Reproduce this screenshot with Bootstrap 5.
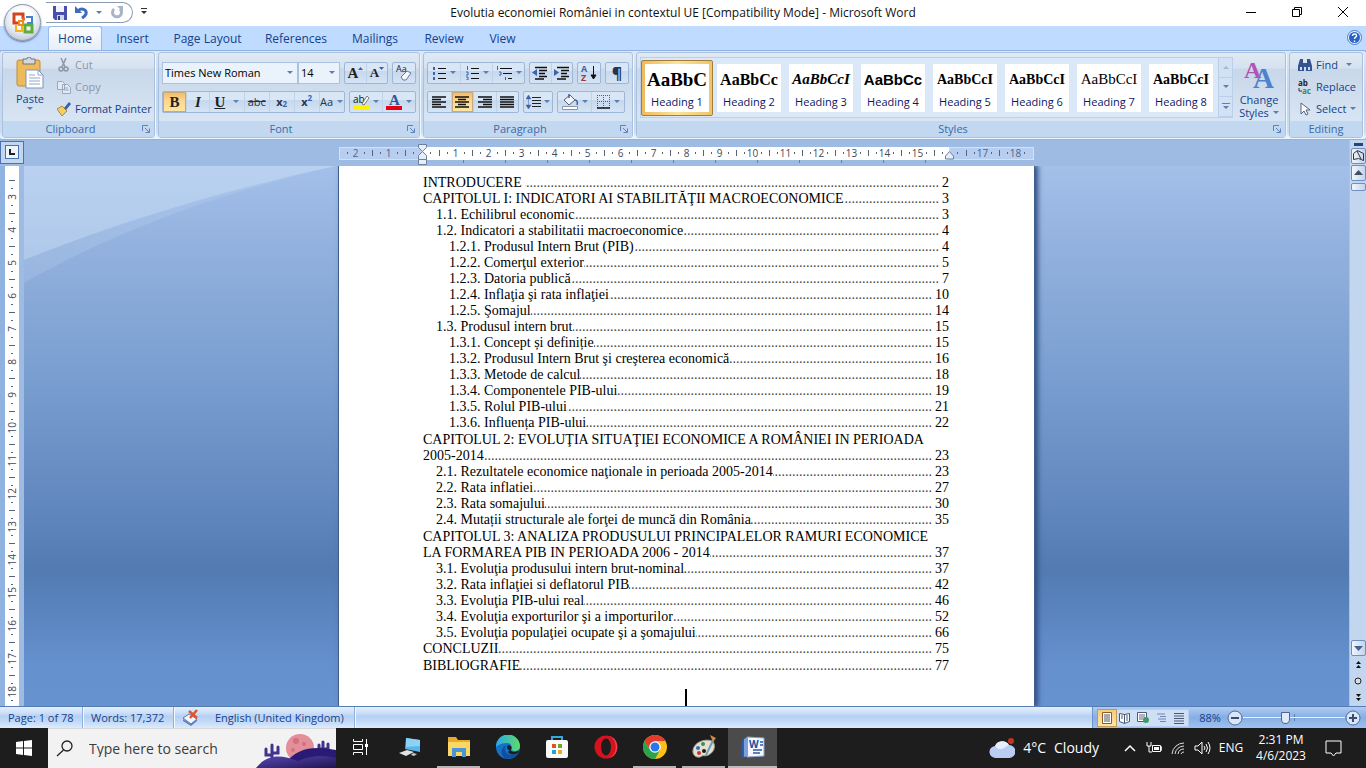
<!DOCTYPE html>
<html lang="en">
<head>
<meta charset="utf-8">
<meta name="viewport" content="width=device-width, initial-scale=1">
<title>Evolutia economiei României in contextul UE - Microsoft Word</title>
<link href="https://cdn.jsdelivr.net/npm/bootstrap@5.3.0/dist/css/bootstrap.min.css" rel="stylesheet">
<style>
body{font-family:"Open Sans","Noto Sans",sans-serif;font-size:11px;line-height:16px;color:#15428b;background:#9dbbe3}
button,select,input{font-family:inherit;font-size:inherit;line-height:inherit}
button{border:0;background:none;padding:0;color:inherit}
a{color:inherit;text-decoration:none}
svg{display:block;flex:none}
/* title bar */
.titlebar{height:26px;background:#fff;color:#111;font-size:12px}
.caption-text{padding-top:5px}
.qat{height:21px;width:87px;margin-left:46px;border:1px solid #8c9ab0;border-left:0;border-radius:0 11px 11px 0;padding-left:7px;margin-top:2px}
.side{flex:1 1 0}
.winbtn{width:46px;height:25px}
.orb{left:4px;top:4px;width:37px;height:37px;border-radius:50%;z-index:5;border:1px solid #8797b0;background:radial-gradient(circle at 50% 35%,#fff 0 30%,#dfe3ec 60%,#c3c9d6 80%,#fff 100%);box-shadow:0 1px 2px #5b76a5}
.caret{width:0;height:0;border:3px solid transparent;border-top-color:#5c7fae;border-bottom:0;flex:none}
.mid{place-items:center}
/* tabs */
.tabrow{height:24px;background:#bfdbff;padding-left:48px;font-size:12px}
.tabrow .nav-link{padding:4px 0 0;height:24px;color:#15428b;border:1px solid transparent;border-bottom:0;text-align:center;border-radius:3px 3px 0 0}
.tabrow .nav-link.active{background:linear-gradient(#fdfdfe,#e6eef8);border-color:#99bbe8;color:#15428b}
/* ribbon */
.ribbon{height:90px;background:linear-gradient(#dfe8f5 0,#cfdef0 20%,#c5d7ec 50%,#c9dcf1 92%,#e5f4ff 98%);border-top:1px solid #8db2e3;border-bottom:1px solid #8db2e3;padding:1px 3px 1px 2px;gap:3px;border-radius:3px}
.grp{height:86px;border:1px solid #a9c1de;border-radius:3px;background:linear-gradient(#e0e9f4 0,#d6e2f0 18%,#c8d7e9 19%,#dce9f7 100%);box-shadow:1px 1px 0 #eef6ff;display:flex;flex-direction:column}
.grp-body{flex:1;min-height:0}
.grp-label{height:16px;background:#c1d8f0;color:#3e6aaa;text-align:center;display:flex}
.grp-label span{flex:1}
.grp-label button{width:16px;display:grid;place-items:center}
.g-clip{width:153px}.g-font{width:262px}.g-para{width:210px}.g-edit{width:74px}
.rows{padding:9px 3px 0;display:flex;flex-direction:column;gap:7px}
.rowline{display:flex;gap:4px}
.tg{display:flex;height:22px;border:1px solid #9db7d8;border-radius:2px;background:linear-gradient(#d9e6f5 0 40%,#c5d8ee 41%,#d5e4f5)}
.tg button{display:flex;align-items:center;justify-content:center;gap:3px;flex:1 1 22px;border-left:1px solid #bfd2e9;color:#26344e;min-width:0}
.tg button:first-child{border-left:0}
.tg .wide{flex-basis:34px}
.tg .third{flex-basis:24px;gap:0}
.tg .on{background:linear-gradient(#f5b863,#fdd48b 40%,#ffe79f);box-shadow:0 0 0 1px #c4ab7c inset}
.tg .glyph{font-family:"Liberation Serif",serif;font-size:15px;font-weight:700;color:#222;gap:0}
.tg .glyph.small-a{font-size:13px}
.tg sub,.tg sup{font-size:8px;color:#3b62ad}
.combo{appearance:none;height:22px;border:1px solid #abc1de;border-radius:0;background:#eaf2fb url("data:image/svg+xml,%3Csvg xmlns='http://www.w3.org/2000/svg' width='6' height='3'%3E%3Cpath d='M0 0h6L3 3z' fill='%235c7fae'/%3E%3C/svg%3E") no-repeat right 4px center;color:#000;padding:0 2px}
.combo-font{width:136px}.combo-size{width:42px}
.w44{width:44px}.w24{width:24px}.w68{width:68px}.w98{width:98px}.w92{width:92px}.w30{width:30px}.w184{width:184px}
.paste{width:46px;padding-top:4px}
.paste svg{margin-bottom:2px}
.cmds{padding-top:1px}
.smallcmd{display:flex;align-items:center;gap:4px;height:22px;white-space:nowrap}
.off{color:#8d96a5}
.gallery{margin:4px 3px 3px;height:61px;border:1px solid #b9cfea;background:#dbe8f7;flex:1;overflow:hidden}
.sty{flex:0 0 72px;height:56px;margin-top:2px;padding:4px;background:none}
.sty>span{display:block;width:64px;height:48px;background:#fff;overflow:hidden}
.sty b,.sty i{display:block;height:31px;line-height:31px;font-family:"Liberation Serif",serif;color:#000;white-space:nowrap;width:64px;text-align:center;font-size:16px}
.sty small{display:block;font-size:11px;line-height:14px;color:#0d1668;text-align:center;white-space:nowrap}
.sty.sel{border:1px solid #a07f3c;padding:3px;background:linear-gradient(90deg,#f0b95c,#fbe39a 50%,#f0c568);border-radius:2px}
.sty .s19{font-size:19px}.sty .sans{font-family:"Liberation Sans",sans-serif;font-size:15px}.sty .s15{font-size:15px}.sty .s14{font-size:14px}
.galbtns{width:14px}
.galbtns button{flex:1;border-left:1px solid #b9cfea;border-bottom:1px solid #b9cfea;display:grid;place-items:center;background:#d2e2f4}
.change{width:46px;padding-top:4px;margin-right:3px;line-height:13px}
/* workspace */
.workspace{background:#9dbbe3}
.hbar{height:26px}
.corner{width:24px;height:23px;border:1px solid #4a72b0;background:#c3d5ef;margin-top:1px;display:grid;place-items:center}
.corner span{width:14px;height:14px;border:1px solid #4a72b0;background:#eef4fc;display:grid;place-items:center}
.scale{width:695px;padding-top:7px;font-size:10px;color:#3f4a5c}
.band{height:13px;line-height:13px;display:flex;overflow:hidden}
.margin-l,.margin-r{background:#b7cef0;outline:1px solid #d2e1f7;outline-offset:-1px;color:#4f6389}
.margin-l{width:83px}.margin-r{width:85px}
.inner{width:527px;background:#fff}
.cm{flex:0 0 33px;text-align:center;background:linear-gradient(#56637c,#56637c) 0 50%/1px 6px no-repeat,linear-gradient(#56637c,#56637c) 8px 50%/1px 2px no-repeat,linear-gradient(#56637c,#56637c) 25px 50%/1px 2px no-repeat}
.half{flex:0 0 17px;background:linear-gradient(#56637c,#56637c) 8px 50%/1px 2px no-repeat}
.half.t{background:linear-gradient(#56637c,#56637c) 0 50%/1px 6px no-repeat,linear-gradient(#56637c,#56637c) 8px 50%/1px 2px no-repeat}
.tabticks{height:6px;margin-left:83px;width:527px;background:repeating-linear-gradient(90deg,transparent 0 41px,#6282b2 41px 42px) 0 0/100% 3px no-repeat}
.ind-l{left:79px;top:4px}.ind-r{left:606px;top:10px}
.vbar{width:24px;padding-left:5px;background:linear-gradient(90deg,#8fb2e0 0 5px,#9dbbe3 5px)}
.vscale{width:14px;background:#fff;color:#3f4a5c;font-size:10px;overflow:hidden;height:100%;padding-top:14px}
.vcm{height:33px;width:14px;display:flex;align-items:center;justify-content:center;background:linear-gradient(#56637c,#56637c) 50% 0/6px 1px no-repeat,linear-gradient(#56637c,#56637c) 50% 8px/2px 1px no-repeat,linear-gradient(#56637c,#56637c) 50% 25px/2px 1px no-repeat}
.vcm span{writing-mode:vertical-rl;transform:rotate(180deg);line-height:14px}
.canvas{background:linear-gradient(#a3c0ea 0,#93b1de 15%,#7a9fd0 38%,#6388c0 62%,#527bb2 75%,#6490cd 92%,#6793d0)}
.sheet{width:695px;height:100%;background:#fff;box-shadow:0 0 0 1px #3f5f8f,3px 0 5px 1px #2f4f82;color:#000;padding:9px 85px 0 84px;overflow:hidden;font-family:"Liberation Serif",serif;font-size:14px;line-height:16px;position:relative}
.toc{list-style:none;margin:0;padding:0}
.toc li{display:flex;white-space:nowrap}
.toc .l2{padding-left:13px}.toc .l3{padding-left:26px}
.toc .brk{display:block}
.toc .chap{margin-top:1px}
.lead-dots{flex:1;overflow:hidden;direction:rtl;height:16px;min-width:0;margin-right:3px;color:#444}
.lead-dots::before{content:"................................................................................................................................................................"}
.cursor{width:2px;height:18px;background:#000;margin:15px auto 0}
.vscroll{width:17px;background:#c3d6f0;border-left:1px solid #a9c2e6}
.splitter{height:3px;width:9px;background:#27457b;margin:3px 0 2px}
.sb{width:15px;height:16px;border:1px solid #6f8fbf;border-radius:2px;background:linear-gradient(90deg,#f1f6fd,#c3d4ec);display:grid;place-items:center;margin-top:1px}
.sb.thumb{height:8px;margin-top:2px}
/* status bar */
.status{height:22px;background:linear-gradient(#e3effd 0,#cfe1f9 25%,#b5d0f3 45%,#c6dcf8 75%,#dcebff);border-top:1px solid #567db1;font-size:11px}
.status>div,.status>a{display:flex;align-items:center}
.cell{border-right:1px solid #90b1dd;box-shadow:1px 0 0 #f1f7ff}
.zoombar{width:274px;background:linear-gradient(#b0ccf2,#86aee4 50%,#9fc1f0);border-left:1px solid #6e94cc}
.pct{width:26px;margin:0 4px 0 8px;text-align:center}
.views{border:1px solid #b5cdf0;background:#cfe0f6;height:18px}
.views button{width:18px;height:16px;display:grid;place-items:center}
.views .on{background:linear-gradient(#f7ca7b,#ffe7a5);box-shadow:0 0 0 1px #bf9a58}
.zslide{appearance:none;width:102px;height:16px;background:linear-gradient(#e9f2ff,#e9f2ff) 0 50%/100% 1px no-repeat,linear-gradient(#5e80b5,#5e80b5) 50% 50%/1px 7px no-repeat}
.zslide::-webkit-slider-thumb{appearance:none;width:9px;height:12px;border:1px solid #4c6691;border-radius:1px 1px 5px 5px;background:#dfe9f7}
/* taskbar */
.taskbar{height:40px;background:#1d1d1d;color:#fff;font-size:12px}
.start{width:48px;display:grid;place-items:center}
.search{width:288px;background:#f2f2f2;border-top:1px solid #d8d8d8;overflow:hidden}
.search input{border:0;outline:0;background:none;font-size:14px;color:#333;width:150px;padding:0}
.search input::placeholder{color:#3c3c3c;opacity:1}
.task{width:49px;display:grid;place-items:center;border-bottom:2px solid transparent;background-clip:padding-box}
.task.open{border-image:linear-gradient(90deg,transparent 4px,#b5b5b5 4px 45px,transparent 45px) 1}
.task.active{background:#4b4b4b;border-bottom:2px solid #bdbdbd}
.tray button,.tray a{display:grid;place-items:center;width:24px}
.weather{font-size:14px;margin-right:19px}
.tray .lang{width:28px;margin-left:3px}.tray .clock{width:72px}.tray .note{width:32px}
.edge-gap{width:17px}
</style>
</head>
<body class="vh-100 d-flex flex-column overflow-hidden">
<button class="orb mid position-absolute d-grid" aria-label="Office Button">
<svg width="24" height="24" viewBox="0 0 24 24" fill="none" stroke-width="3"><path d="M8 12H3V3h9v5" stroke="#d4431c"/><path d="M11 8h3" stroke="#e9682a"/><path d="M15 6h6v6h-5" stroke="#3f83cf" stroke-width="2"/><path d="M5 14v6h6v-5" stroke="#f4b31b" stroke-width="2"/><path d="M14 21h7v-7h-7z" stroke="#5fae3b"/><path d="M8 10h4v4H8z" stroke="#f08a24" stroke-width="2"/></svg></button>

<header class="titlebar d-flex align-items-start">
 <div class="side d-flex align-items-center">
  <div class="qat d-flex align-items-center">
   <button aria-label="Save"><svg width="14" height="14" viewBox="0 0 14 14"><path d="M0 0h14v14H2l-2-2z" fill="#4a4fae"/><path d="M3 0h8v6H3z" fill="#f0f3fb"/><path d="M4 9h7v5H4z" fill="#cfd5ea"/><path d="M5 10h2v4H5z" fill="#333a80"/></svg></button>
   <button class="ms-2" aria-label="Undo"><svg width="13" height="13" viewBox="0 0 13 13" fill="none" stroke="#3b6cc0" stroke-width="3"><path d="M3 5c4-4 9-1 8 3-1 2-2 3-4 4"/><path d="M0 0v7h7z" fill="#3b6cc0" stroke="none"/></svg></button>
   <span class="caret ms-2"></span>
   <button class="ms-2" aria-label="Repeat"><svg width="14" height="14" viewBox="0 0 14 14" fill="none" stroke="#a9b4c8" stroke-width="3"><path d="M4 3a4.500 4.500 0 1 0 6 0"/><path d="M7 0h6v6z" fill="#a9b4c8" stroke="none"/></svg></button>
  </div>
  <button class="ms-2" aria-label="Customize Quick Access Toolbar"><svg width="6" height="7"><path d="M0 0h6v1H0zM0 3h6L3 6z" fill="#333"/></svg></button>
 </div>
 <div class="caption-text text-nowrap">Evolutia economiei României in contextul UE [Compatibility Mode] - Microsoft Word</div>
 <div class="side d-flex justify-content-end">
  <button class="winbtn mid d-grid" aria-label="Minimize"><svg width="11" height="11"><path d="M0 5.500h10" stroke="#000"/></svg></button>
  <button class="winbtn mid d-grid" aria-label="Restore"><svg width="11" height="11" fill="none" stroke="#000"><path d="M.5 2.500h7v7h-7zM2.500 2.500v-2h7v7h-2"/></svg></button>
  <button class="winbtn mid d-grid" aria-label="Close"><svg width="11" height="11" stroke="#000"><path d="M0 0l10 10M10 0L0 10"/></svg></button>
 </div>
</header>

<nav class="tabrow d-flex nav flex-nowrap">
 <a class="nav-link active" style="width:54px" href="#">Home</a>
 <a class="nav-link" style="width:61px" href="#">Insert</a>
 <a class="nav-link" style="width:89px" href="#">Page Layout</a>
 <a class="nav-link" style="width:88px" href="#">References</a>
 <a class="nav-link" style="width:70px" href="#">Mailings</a>
 <a class="nav-link" style="width:68px" href="#">Review</a>
 <a class="nav-link" style="width:49px" href="#">View</a>
 <button class="ms-auto me-1" aria-label="Help"><svg width="15" height="15" viewBox="0 0 15 15"><circle cx="7.500" cy="7.500" r="7" fill="#e9f2ff" stroke="#4a7bd0"/><circle cx="7.500" cy="7.500" r="5.500" fill="#2a62c4"/><path d="M5.500 6c0-3 4.500-2.500 4 0-.3 1-2 1.300-2 3M7.500 10.500v1.500" fill="none" stroke="#fff" stroke-width="1.500"/></svg></button>
</nav>

<svg width="0" height="0" class="position-absolute"><defs><symbol id="launch" viewBox="0 0 8 8"><path d="M.5 6V.5H6M3 3l4 4M7.500 3.500v4h-4" fill="none" stroke="#5e83b4"/></symbol></defs></svg>

<section class="ribbon d-flex">
 <div class="grp g-clip">
  <div class="grp-body d-flex">
   <button class="paste d-flex flex-column align-items-center ms-1"><svg width="28" height="32" viewBox="0 0 28 32"><rect x="1" y="3" width="23" height="26" rx="2" fill="#eebb5c" stroke="#c08c36"/><path d="M7 2h4a2 2 0 0 1 4 0h4v5H7z" fill="#d3d7de" stroke="#70757f"/><path d="M10 13h12l5 5v13H10z" fill="#fff" stroke="#7d93ba"/><path d="M22 13v5h5M13 18h6M13 21h11M13 24h11M13 27h11" fill="none" stroke="#8fa6cc"/></svg><span>Paste</span><span class="caret"></span></button>
   <div class="cmds ms-1">
    <button class="smallcmd off"><svg width="14" height="14" viewBox="0 0 14 14" fill="none" stroke="#8c97a8" stroke-width="1.500"><path d="M4 0l4 9M9 0L5 9"/><circle cx="4" cy="11" r="2"/><circle cx="9" cy="11" r="2"/></svg>Cut</button>
    <button class="smallcmd off"><svg width="14" height="14" viewBox="0 0 14 14" fill="#e4eaf3" stroke="#9aa7bc"><path d="M.5 1.500h5l2 2v6h-7zM5.500 4.500h5l3 3v6h-8zM7 8h4M7 10h5"/></svg>Copy</button>
    <button class="smallcmd"><svg width="14" height="14" viewBox="0 0 14 14"><path d="M0 7l5-3 5 5-5 5z" fill="#f1cf6b" stroke="#b08a2f"/><path d="M7 6l5-6 2 2-5 6z" fill="#3f5fa5"/></svg>Format Painter</button>
   </div>
  </div>
  <div class="grp-label"><span>Clipboard</span><button aria-label="Clipboard options"><svg width="8" height="8"><use href="#launch"/></svg></button></div>
 </div>

 <div class="grp g-font">
  <div class="grp-body rows">
   <div class="rowline">
    <div class="d-flex"><select class="combo combo-font" aria-label="Font"><option>Times New Roman</option></select><select class="combo combo-size" aria-label="Font size"><option>14</option></select></div>
    <div class="tg w44"><button class="glyph" aria-label="Grow Font">A<svg width="5" height="14"><path d="M0 4h5L2.500 1z" fill="#3b62ad"/></svg></button><button class="glyph small-a" aria-label="Shrink Font">A<svg width="5" height="14"><path d="M0 1h5L2.500 4z" fill="#3b62ad"/></svg></button></div>
    <div class="tg w24"><button aria-label="Clear Formatting"><svg width="18" height="18" viewBox="0 0 18 18"><text x="1" y="8" font-size="9" fill="#222">Aa</text><path d="M6 13l6-6 4 2-5 7H8z" fill="#f5f7fc" stroke="#6a7690"/></svg></button></div>
   </div>
   <div class="rowline">
    <div class="tg w184"><button class="glyph on">B</button><button class="glyph fst-italic">I</button><button class="glyph wide"><u>U</u><span class="caret ms-2"></span></button><button class="third"><s>abc</s></button><button class="third fw-bold">x<sub>2</sub></button><button class="third fw-bold">x<sup>2</sup></button><button class="third wide">Aa<span class="caret ms-1"></span></button></div>
    <div class="tg w68"><button aria-label="Highlight"><svg width="17" height="18" viewBox="0 0 17 18"><text x="0" y="10" font-size="10" fill="#111">ab</text><path d="M9 11l5-8 2 2-5 7z" fill="#fff" stroke="#777"/><path d="M0 13h16v4H0z" fill="#fff200"/></svg><span class="caret"></span></button><button aria-label="Font Color"><svg width="17" height="18" viewBox="0 0 17 18"><text x="3" y="12" font-size="15" font-weight="700" font-family="Liberation Serif" fill="#2f5597">A</text><path d="M0 13h16v4H0z" fill="#e3000f"/></svg><span class="caret"></span></button></div>
   </div>
  </div>
  <div class="grp-label"><span>Font</span><button aria-label="Font options"><svg width="8" height="8"><use href="#launch"/></svg></button></div>
 </div>

 <div class="grp g-para">
  <div class="grp-body rows">
   <div class="rowline">
    <div class="tg w98">
     <button aria-label="Bullets"><svg width="15" height="14"><path d="M6 2.500h8M6 7.500h8M6 12.500h8" stroke="#111"/><path d="M1 1h2v3H1zM1 6h2v3H1zM1 11h2v3H1z" fill="#3e63a8"/></svg><span class="caret"></span></button>
     <button aria-label="Numbering"><svg width="15" height="14"><path d="M6 2.500h8M6 7.500h8M6 12.500h8" stroke="#111"/><path d="M2.500 0v4M1 6h2v3H1M1 11h2v3H1" fill="none" stroke="#3e63a8"/></svg><span class="caret"></span></button>
     <button aria-label="Multilevel List"><svg width="17" height="14"><path d="M4 2.500h12M7 7.500h9M12 12.500h4" stroke="#111"/><path d="M1.500 0v4M3 6h2v3H3M9.500 11v3" fill="none" stroke="#3e63a8"/></svg><span class="caret"></span></button></div>
    <div class="tg w44"><button aria-label="Decrease Indent"><svg width="16" height="14"><path d="M3 1.500h12M7 4.500h8M7 7.500h6M7 10.500h8M3 13h9" stroke="#111" stroke-width="1.500"/><path d="M5 3v7L0 6.500z" fill="#3e63a8"/></svg></button><button aria-label="Increase Indent"><svg width="16" height="14"><path d="M3 1.500h12M7 4.500h8M7 7.500h6M7 10.500h8M3 13h9" stroke="#111" stroke-width="1.500"/><path d="M0 3v7l5-3.500z" fill="#3e63a8"/></svg></button></div>
    <div class="tg w24"><button aria-label="Sort"><svg width="16" height="20" viewBox="0 0 16 20"><text x="0" y="9" font-size="9" font-weight="700" fill="#3e63a8">A</text><text x="0" y="18" font-size="9" font-weight="700" fill="#a13c3c">Z</text><path d="M12.500 3v12M10 12l2.500 4 2.500-4z" stroke="#111" fill="#111"/></svg></button></div>
    <div class="tg w24"><button class="fw-bold fs-6">¶</button></div>
   </div>
   <div class="rowline">
    <div class="tg w92">
     <button aria-label="Align Left"><svg width="14" height="12"><path d="M0 1h14M0 3.500h9M0 6h14M0 8.500h9M0 11h14" stroke="#111" stroke-width="1.300"/></svg></button>
     <button class="on" aria-label="Center"><svg width="14" height="12"><path d="M0 1h14M3 3.500h8M0 6h14M3 8.500h8M0 11h14" stroke="#111" stroke-width="1.300"/></svg></button>
     <button aria-label="Align Right"><svg width="14" height="12"><path d="M0 1h14M5 3.500h9M0 6h14M5 8.500h9M0 11h14" stroke="#111" stroke-width="1.300"/></svg></button>
     <button aria-label="Justify"><svg width="14" height="12"><path d="M0 1h14M0 3.500h14M0 6h14M0 8.500h14M0 11h14" stroke="#111" stroke-width="1.300"/></svg></button></div>
    <div class="tg w30"><button aria-label="Line Spacing"><svg width="15" height="16"><path d="M6 3.500h9M6 6.500h9M6 9.500h9M6 12.500h9" stroke="#222"/><path d="M2.500 3v10M0 5l2.500-4L5 5zM0 11l2.500 4L5 11z" fill="#3e63a8" stroke="#3e63a8" stroke-width=".5"/></svg><span class="caret"></span></button></div>
    <div class="tg w68"><button aria-label="Shading"><svg width="17" height="17" viewBox="0 0 17 17"><path d="M2 7l6-5 5 5-6 5z" fill="#f2f5fb" stroke="#53627e"/><path d="M7 5V1M13 7c2 0 3 2 2 5" stroke="#3e63a8" fill="none" stroke-width="1.500"/><path d="M.5 13.500h15v3H.5z" fill="#fff" stroke="#8794ab"/></svg><span class="caret"></span></button><button aria-label="Borders"><svg width="14" height="14" fill="none" stroke="#4f5d78"><path d="M.5 0v13M6.500 0v13M12.500 0v13M0 .5h13M0 6.500h13" stroke-dasharray="1 1"/><path d="M0 13h13" stroke="#111" stroke-width="1.500"/></svg><span class="caret"></span></button></div>
   </div>
  </div>
  <div class="grp-label"><span>Paragraph</span><button aria-label="Paragraph options"><svg width="8" height="8"><use href="#launch"/></svg></button></div>
 </div>

 <div class="grp flex-grow-1" style="min-width:0">
  <div class="grp-body d-flex">
   <div class="gallery d-flex">
    <button class="sty sel"><span><b class="s19">AaBbC</b><small>Heading 1</small></span></button>
    <button class="sty"><span><b>AaBbCc</b><small>Heading 2</small></span></button>
    <button class="sty"><span><i class="s15 fw-bold">AaBbCcI</i><small>Heading 3</small></span></button>
    <button class="sty"><span><b class="sans">AaBbCc</b><small>Heading 4</small></span></button>
    <button class="sty"><span><b class="s14">AaBbCcI</b><small>Heading 5</small></span></button>
    <button class="sty"><span><b class="s14">AaBbCcI</b><small>Heading 6</small></span></button>
    <button class="sty"><span><b class="s15 fw-normal">AaBbCcI</b><small>Heading 7</small></span></button>
    <button class="sty"><span><b class="s14">AaBbCcI</b><small>Heading 8</small></span></button>
    <div class="galbtns d-flex flex-column ms-auto"><button aria-label="Row up"><svg width="6" height="3"><path d="M0 3h6L3 0z" fill="#a9b6c9"/></svg></button><button aria-label="Row down"><span class="caret"></span></button><button aria-label="More"><svg width="8" height="7"><path d="M0 0h8v1H0zM1 3h6L4 6z" fill="#5c7fae"/></svg></button></div>
   </div>
   <button class="change"><svg class="mx-auto" width="30" height="30" viewBox="0 0 30 30" font-family="Liberation Serif" font-weight="700"><text x="0" y="19" font-size="24" fill="#b054b5">A</text><text x="9" y="29" font-size="29" fill="#4d83cc">A</text></svg><span class="d-block pt-1">Change</span><span class="d-flex align-items-center justify-content-center">Styles<span class="caret ms-1"></span></span></button>
  </div>
  <div class="grp-label"><span>Styles</span><button aria-label="Styles options"><svg width="8" height="8"><use href="#launch"/></svg></button></div>
 </div>

 <div class="grp g-edit">
  <div class="grp-body cmds ps-1 ms-1">
   <button class="smallcmd"><svg width="14" height="14" viewBox="0 0 14 14"><path d="M2 1h3v4h4V1h3l2 7v5H8V9H6v4H0V8z" fill="#34538f"/><path d="M2 9h2v3H2zM10 9h2v3h-2z" fill="#cfdcf2"/></svg>Find<span class="caret ms-1"></span></button>
   <button class="smallcmd"><svg width="14" height="18" viewBox="0 0 14 18"><text x="0" y="8" font-size="8" fill="#222" font-weight="700">ab</text><text x="4" y="16" font-size="8" fill="#3c8a55" font-weight="700">ac</text><path d="M1 10v3h3" stroke="#333" fill="none"/></svg>Replace</button>
   <button class="smallcmd"><svg width="14" height="14" viewBox="0 0 14 14"><path d="M3 1v11l3-3 2 4 2-1-2-4h4z" fill="#fff" stroke="#56627a"/></svg>Select<span class="caret"></span></button>
  </div>
  <div class="grp-label"><span>Editing</span></div>
 </div>
</section>

<main class="workspace d-flex flex-grow-1" style="min-height:0">
 <div class="d-flex flex-column flex-grow-1">
  <div class="hbar d-flex">
   <div class="corner"><span><svg width="6" height="6"><path d="M1 0v5h5" fill="none" stroke="#222" stroke-width="2"/></svg></span></div>
   <div class="flex-grow-1 d-flex justify-content-center">
    <div class="scale position-relative">
     <div class="d-flex">
      <div class="band margin-l"><span class="cm">2</span><span class="cm">1</span><span class="half t"></span></div>
      <div class="band inner"><span class="half"></span><span class="cm">1</span><span class="cm">2</span><span class="cm">3</span><span class="cm">4</span><span class="cm">5</span><span class="cm">6</span><span class="cm">7</span><span class="cm">8</span><span class="cm">9</span><span class="cm">10</span><span class="cm">11</span><span class="cm">12</span><span class="cm">13</span><span class="cm">14</span><span class="cm">15</span><span class="half t"></span></div>
      <div class="band margin-r"><span class="half"></span><span class="cm">17</span><span class="cm">18</span></div>
     </div>
     <div class="tabticks"></div>
     <svg class="ind-l position-absolute" width="9" height="21" viewBox="0 0 9 21" fill="#e6eefa" stroke="#6b7f9f"><path d="M.5 .5h8v3l-4 4-4-4zM.5 15.500v-4l4-4 4 4v4zM.5 15.500h8v5h-8z"/></svg>
     <svg class="ind-r position-absolute" width="9" height="10" viewBox="0 0 9 10" fill="#e6eefa" stroke="#6b7f9f"><path d="M.5 9v-3l4-4.500 4 4.500v3z"/></svg>
    </div>
   </div>
  </div>
  <div class="d-flex flex-grow-1" style="min-height:0">
   <div class="vbar"><div class="vscale">
    <div class="vcm"><span>3</span></div><div class="vcm"><span>4</span></div><div class="vcm"><span>5</span></div><div class="vcm"><span>6</span></div><div class="vcm"><span>7</span></div><div class="vcm"><span>8</span></div><div class="vcm"><span>9</span></div><div class="vcm"><span>10</span></div><div class="vcm"><span>11</span></div><div class="vcm"><span>12</span></div><div class="vcm"><span>13</span></div><div class="vcm"><span>14</span></div><div class="vcm"><span>15</span></div><div class="vcm"><span>16</span></div><div class="vcm"><span>17</span></div><div class="vcm"><span>18</span></div>
   </div></div>
   <div class="canvas flex-grow-1 position-relative d-flex justify-content-center overflow-hidden">
    <svg class="position-absolute top-0 start-0" width="312" height="118" viewBox="0 0 312 118"><path d="M0 0h312C190 28 90 66 0 117z" fill="#cfe2f7" fill-opacity=".18"/><path d="M0 0h312C190 26 90 58 0 94z" fill="#d6e8fa" fill-opacity=".35"/></svg>
    <article class="sheet">
     <ul class="toc">
      <li>INTRODUCERE&nbsp;<span class="lead-dots"></span>2</li>
      <li>CAPITOLUL I: INDICATORI AI STABILITĂŢII MACROECONOMICE<span class="lead-dots"></span>3</li>
      <li class="l2">1.1. Echilibrul economic<span class="lead-dots"></span>3</li>
      <li class="l2">1.2. Indicatori a stabilitatii macroeconomice<span class="lead-dots"></span>4</li>
      <li class="l3">1.2.1. Produsul Intern Brut (PIB)<span class="lead-dots"></span>4</li>
      <li class="l3">1.2.2. Comerţul exterior<span class="lead-dots"></span>5</li>
      <li class="l3">1.2.3. Datoria publică<span class="lead-dots"></span>7</li>
      <li class="l3">1.2.4. Inflaţia şi rata inflaţiei<span class="lead-dots"></span>10</li>
      <li class="l3">1.2.5. Şomajul<span class="lead-dots"></span>14</li>
      <li class="l2">1.3. Produsul intern brut<span class="lead-dots"></span>15</li>
      <li class="l3">1.3.1. Concept și definiție<span class="lead-dots"></span>15</li>
      <li class="l3">1.3.2. Produsul Intern Brut şi creşterea economică<span class="lead-dots"></span>16</li>
      <li class="l3">1.3.3. Metode de calcul<span class="lead-dots"></span>18</li>
      <li class="l3">1.3.4. Componentele PIB-ului<span class="lead-dots"></span>19</li>
      <li class="l3">1.3.5. Rolul PIB-ului<span class="lead-dots"></span>21</li>
      <li class="l3">1.3.6. Influența PIB-ului<span class="lead-dots"></span>22</li>
      <li class="chap brk">CAPITOLUL 2: EVOLUŢIA SITUAŢIEI ECONOMICE A ROMÂNIEI IN PERIOADA</li>
      <li>2005-2014<span class="lead-dots"></span>23</li>
      <li class="l2">2.1. Rezultatele economice naţionale in perioada 2005-2014<span class="lead-dots"></span>23</li>
      <li class="l2">2.2. Rata inflatiei<span class="lead-dots"></span>27</li>
      <li class="l2">2.3. Rata somajului<span class="lead-dots"></span>30</li>
      <li class="l2">2.4. Mutații structurale ale forţei de muncă din România<span class="lead-dots"></span>35</li>
      <li class="chap brk">CAPITOLUL 3: ANALIZA PRODUSULUI PRINCIPALELOR RAMURI ECONOMICE</li>
      <li>LA FORMAREA PIB IN PERIOADA 2006 - 2014<span class="lead-dots"></span>37</li>
      <li class="l2">3.1. Evoluţia produsului intern brut-nominal<span class="lead-dots"></span>37</li>
      <li class="l2">3.2. Rata inflaţiei si deflatorul PIB<span class="lead-dots"></span>42</li>
      <li class="l2">3.3. Evoluţia PIB-ului real<span class="lead-dots"></span>46</li>
      <li class="l2">3.4. Evoluţia exporturilor şi a importurilor<span class="lead-dots"></span>52</li>
      <li class="l2">3.5. Evoluţia populaţiei ocupate şi a şomajului<span class="lead-dots"></span>66</li>
      <li>CONCLUZII<span class="lead-dots"></span>75</li>
      <li class="chap">BIBLIOGRAFIE<span class="lead-dots"></span>77</li>
     </ul>
     <div class="cursor"></div>
    </article>
   </div>
  </div>
 </div>
 <div class="vscroll d-flex flex-column align-items-center">
  <div class="splitter"></div>
  <button class="sb mt-0" aria-label="View Ruler"><svg width="11" height="11" fill="none" stroke="#333"><path d="M.5 3.500l4-3 6 3v7l-5-2-5 1zM4 1l4 8"/></svg></button>
  <button class="sb" aria-label="Scroll up"><svg width="9" height="5"><path d="M0 5h9L4.500 0z" fill="#444e63"/></svg></button>
  <div class="sb thumb"></div>
  <button class="sb mt-auto" aria-label="Scroll down"><svg width="9" height="5"><path d="M0 0h9L4.500 5z" fill="#44618f"/></svg></button>
  <button class="mt-1" aria-label="Previous Page"><svg width="7" height="9"><path d="M1 4h5L3.500 1zM1 8h5L3.500 5z" fill="#111"/></svg></button>
  <button class="my-2" aria-label="Browse Object"><svg width="8" height="8"><circle cx="4" cy="4" r="3" fill="#dcdcdc" stroke="#222"/></svg></button>
  <button class="mb-1" aria-label="Next Page"><svg width="7" height="9"><path d="M1 1h5L3.500 4zM1 5h5L3.500 8z" fill="#111"/></svg></button>
 </div>
</main>

<footer class="status d-flex">
 <div class="cell ps-2" style="width:83px">Page: 1 of 78</div>
 <div class="cell ps-2" style="width:91px">Words: 17,372</div>
 <div style="width:33px" class="ps-2"><svg width="18" height="17" viewBox="0 0 18 17"><path d="M1 9l6-4 8 5-6 5z" fill="#f2f5fb" stroke="#5b77a8"/><path d="M1 10v2l8 5 6-5v-2l-6 5z" fill="#5b83c0"/><path d="M7 2l8 7M15 1L8 9" stroke="#e2542c" stroke-width="2.500"/></svg></div>
 <div class="cell ps-2" style="width:148px">English (United Kingdom)</div>
 <div class="zoombar ms-auto ps-1">
  <div class="views d-flex"><button class="on" aria-label="Print Layout"><svg width="12" height="12"><path d="M1.500 .5h9v11h-9z" fill="#fff" stroke="#8c5a2c"/><path d="M3 3h6M3 5h6M3 7h6M3 9h6" stroke="#555"/></svg></button><button aria-label="Full Screen Reading"><svg width="12" height="12"><path d="M.5 1.500l5 1 5-1v8l-5 2-5-2zM5.500 2v9" fill="#fff" stroke="#445577"/><path d="M2 4h2M2 6h2M7 4h2M7 6h2M7 8h2" stroke="#445577"/></svg></button><button aria-label="Web Layout"><svg width="13" height="12"><path d="M.5 .5h9v9h-9z" fill="#fff" stroke="#4a5d7d"/><path d="M2 3h6M2 5h6M2 7h4" stroke="#667"/><circle cx="9" cy="8" r="3" fill="#3c9a63"/></svg></button><button aria-label="Outline"><svg width="12" height="12"><path d="M2 2h8M5 4.500h6M3 7h8M5 9.500h6" stroke="#6c88b3"/></svg></button><button aria-label="Draft"><svg width="12" height="12"><path d="M1 1.500h10M1 4h10M1 6.500h10M1 9h10M1 11.500h10" stroke="#4a5873"/></svg></button></div>
  <a class="pct" href="#">88%</a>
  <button aria-label="Zoom out"><svg width="16" height="16"><circle cx="8" cy="8" r="7" fill="#d7e6fa" stroke="#4f6a96"/><path d="M4 8h8" stroke="#3b4d6e" stroke-width="2"/></svg></button>
  <input class="zslide" type="range" min="10" max="200" value="88" aria-label="Zoom">
  <button aria-label="Zoom in"><svg width="16" height="16"><circle cx="8" cy="8" r="7" fill="#d7e6fa" stroke="#4f6a96"/><path d="M4 8h8M8 4v8" stroke="#3b4d6e" stroke-width="2"/></svg></button>
 </div>
</footer>

<footer class="taskbar d-flex">
 <button class="start" aria-label="Start"><svg width="16" height="16" fill="#fff"><path d="M0 2l7-1v6.500H0zM8 1l8-1v7.500H8zM0 8.500h7V15l-7-1zM8 8.500h8V16l-8-1z"/></svg></button>
 <div class="search d-flex align-items-center position-relative">
  <svg class="ms-2 me-3" width="17" height="17" fill="none" stroke="#222" stroke-width="1.300"><circle cx="11" cy="6" r="5"/><path d="M7.500 10L1 16"/></svg>
  <input type="text" placeholder="Type here to search" aria-label="Type here to search">
  <svg class="position-absolute end-0 bottom-0" width="82" height="38" viewBox="0 0 82 38"><defs><linearGradient id="hill" x1="0" y1="0" x2="1" y2="1"><stop offset="0" stop-color="#5b48b4"/><stop offset="1" stop-color="#1d1450"/></linearGradient></defs><path d="M18 32V15M12 19v6h6M24 17v6h-6M69 25V12M65 15v4h4M74 14v5h-5" fill="none" stroke="#40338f" stroke-width="3" stroke-linecap="round"/><circle cx="46" cy="18" r="14" fill="#e48e99"/><circle cx="42" cy="11" r="3" fill="#d1707f"/><circle cx="50" cy="14" r="2" fill="#d1707f"/><circle cx="39" cy="20" r="2" fill="#cf7482"/><path d="M28 38C42 16 60 16 82 20v18z" fill="#2b1a75"/><path d="M2 38c12-15 26-13 42-7 14-6 26-6 38-3v10z" fill="url(#hill)"/></svg>
 </div>
 <button class="task" aria-label="Task View"><svg width="17" height="16" fill="none" stroke="#fff"><path d="M1.500 0v2.500h9V0M1.500 5.500h9v5h-9zM1.500 16v-2.500h9V16M14.500 0v16"/><path d="M13 5h3v3h-3z" fill="#fff" stroke="none"/></svg></button>
 <button class="task" aria-label="Computer"><svg width="24" height="24" viewBox="0 0 24 24"><path d="M8 3l14 2v12L7 14z" fill="#57b5ea"/><path d="M8 3l14 2v6L8 12z" fill="#8bd2f6"/><path d="M1 18l8-3 7 2-8 4z" fill="#dfe3e6"/><path d="M15 18l4 1-3 2-3-1z" fill="#c5cace"/></svg></button>
 <button class="task open" aria-label="File Explorer"><svg width="24" height="22" viewBox="0 0 24 22"><path d="M1 1h8l2 3h12v16H1z" fill="#e9a92c"/><path d="M1 6h22v14H1z" fill="#fcd765"/><path d="M5 21v-9h14v9h-4v-5H9v5z" fill="#4a95d5"/></svg></button>
 <button class="task" aria-label="Edge"><svg width="24" height="24" viewBox="0 0 24 24"><defs><linearGradient id="edg"><stop stop-color="#2aa8e8"/><stop offset="1" stop-color="#5ddc69"/></linearGradient></defs><circle cx="12" cy="12" r="12" fill="#1473c8"/><path d="M0 12a12 12 0 0 1 24-1c0 5-5 6-9 4 2-3 0-7-4-7-5 0-9 2-11 4z" fill="url(#edg)"/><path d="M9 14c0 5 6 8 13 4-3 5-8 6-12 6-5-3-7-9 0-14z" fill="#0f4f9e"/><path d="M15 15c-3 1-5-2-3-5 4 1 4 3 3 5z" fill="#1d1d1d"/><path d="M14 15c3 3 7 2 9 0l-1 3c-4 2-8 2-10-1z" fill="#1d1d1d"/></svg></button>
 <button class="task" aria-label="Microsoft Store"><svg width="24" height="24" viewBox="0 0 24 24"><path d="M7 6V2h10v4" fill="none" stroke="#3aa5dd" stroke-width="2"/><rect x="1" y="5" width="22" height="18" rx="2" fill="#fafafa"/><path d="M7 9h4v4H7z" fill="#e0502c"/><path d="M13 9h4v4h-4z" fill="#6fa72b"/><path d="M7 15h4v4H7z" fill="#2c9fd8"/><path d="M13 15h4v4h-4z" fill="#e9ad22"/></svg></button>
 <button class="task" aria-label="Opera"><svg width="24" height="24" viewBox="0 0 24 24"><circle cx="12" cy="12" r="11.500" fill="#d6121f"/><path d="M15 1c9 3 9 19 0 22 11-2 11-20 0-22z" fill="#ef4450"/><ellipse cx="12" cy="12" rx="5" ry="8.500" fill="#1d1d1d"/></svg></button>
 <button class="task open" aria-label="Chrome"><svg width="24" height="24" viewBox="0 0 24 24"><circle cx="12" cy="12" r="12" fill="#fbc116"/><path d="M1.600 6a12 12 0 0 1 20.800 0H12l-5 9z" fill="#e33b2e"/><path d="M1.600 6A12 12 0 0 0 12 24l5-9H7z" fill="#2ba24c"/><circle cx="12" cy="12" r="5.800" fill="#fff"/><circle cx="12" cy="12" r="4.500" fill="#2a77e8"/></svg></button>
 <button class="task open" aria-label="Paint"><svg width="24" height="24" viewBox="0 0 24 24"><path d="M1 15C2 8 12 3 20 6c4 3 3 10-2 13-4 3-7 1-8 2-4 3-10 0-9-6z" fill="#e5dfcf" stroke="#9e9a8c"/><circle cx="6" cy="13" r="2" fill="#2f6fc1"/><circle cx="11" cy="9" r="2" fill="#35945b"/><circle cx="7" cy="18" r="2" fill="#c33"/><circle cx="12" cy="16" r="2" fill="#1d1d1d"/><path d="M13 20L20 5l2 1-7 14z" fill="#6d9fbd"/><path d="M18 0l6 3-3 4z" fill="#d38c3c"/></svg></button>
 <button class="task active" aria-label="Word"><svg width="24" height="24" viewBox="0 0 24 24"><path d="M1 5l5-3v19l-5 2z" fill="#2e5aa8"/><path d="M6 2l17 1v18l-17 1z" fill="#f4f7fc" stroke="#8ba4cf"/><path d="M3 4l4-2v19l-4 1z" fill="#7da0d8"/><text x="8" y="13" font-size="10" font-weight="700" fill="#224c9c">W</text><path d="M19 7h3M19 10h3M12 15h9M12 18h7" stroke="#2e5aa8" stroke-width="1.500"/></svg></button>
 <div class="tray d-flex ms-auto">
  <div class="weather d-flex align-items-center"><svg width="26" height="22" viewBox="0 0 26 22"><path d="M7 21a6 6 0 0 1-1-12 8 8 0 0 1 14-1 6 6 0 0 1 0 13z" fill="#bccdf4"/><path d="M6 9a8 8 0 0 1 14-1c-3 1-8 8-14 1z" fill="#e7eefd"/><circle cx="22" cy="4" r="3" fill="#c7341d"/></svg><span class="ps-2">4°C</span><span class="ps-2">Cloudy</span></div>
  <button aria-label="Show hidden icons"><svg width="12" height="8" fill="none" stroke="#fff" stroke-width="1.500"><path d="M1 7l5-5 5 5"/></svg></button>
  <button aria-label="Battery"><svg width="16" height="14"><path d="M1 1v4h4V1M3 5v6h3" fill="none" stroke="#fff"/><path d="M6.500 4.500h8v6h-8zM15 6h1v3h-1z" fill="none" stroke="#fff"/><path d="M8 6h5v3H8z" fill="#fff"/></svg></button>
  <button aria-label="Network"><svg width="14" height="14" fill="none" stroke="#ddd"><path d="M1 13A12 12 0 0 1 13 2M4 13a9 9 0 0 1 9-8M7 13a6 6 0 0 1 6-5M10 13a3 3 0 0 1 3-2"/></svg></button>
  <button aria-label="Volume"><svg width="17" height="14" fill="none" stroke="#fff"><path d="M1 5h3l4-4v12L4 9H1zM10 5q2 2 0 4M12 3q3 4 0 8M14 1q4 6 0 12"/></svg></button>
  <button class="lang">ENG</button>
  <button class="clock text-center"><span class="d-block">2:31 PM<br>4/6/2023</span></button>
  <button class="note" aria-label="Notifications"><svg width="17" height="17" fill="none" stroke="#fff"><path d="M1 1h15v12H11l-2.500 3L6 13H1z"/></svg></button>
  <div class="edge-gap"></div>
 </div>
</footer>
<script src="https://cdn.jsdelivr.net/npm/bootstrap@5.3.0/dist/js/bootstrap.bundle.min.js"></script>
</body>
</html>
